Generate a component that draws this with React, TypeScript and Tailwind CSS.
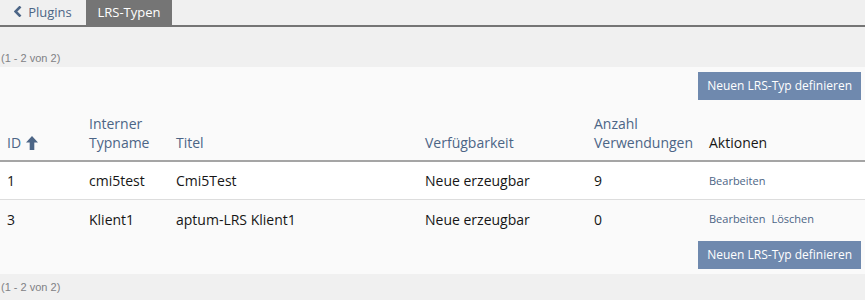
import React from "react";

const font = { fontFamily: '"Open Sans", "Noto Sans", sans-serif' };
const counterFont = { fontFamily: '"Liberation Sans", Arial, sans-serif' };

function ArrowUp() {
  return (
    <svg width="12" height="14" viewBox="0 0 12 14" className="inline-block ml-[5px] -mt-[3px] align-middle">
      <path d="M6 0 L12 6.5 H8.3 V14 H3.7 V6.5 H0 Z" fill="#4c6586" />
    </svg>
  );
}

function Chevron() {
  return (
    <svg width="8" height="11" viewBox="0 0 8 11" className="inline-block mr-[6px] align-middle -mt-[2px]">
      <path d="M6.5 0.5 L1.5 5.5 L6.5 10.5" stroke="#4c6586" strokeWidth="2.6" fill="none" />
    </svg>
  );
}

function Btn() {
  return (
    <button className="bg-[#6f89ae] text-white text-[12px] h-[28px] px-[9px] leading-[28px]">
      Neuen LRS-Typ definieren
    </button>
  );
}

const rows = [
  { id: "1", name: "cmi5test", title: "Cmi5Test", avail: "Neue erzeugbar", count: "9", actions: ["Bearbeiten"] },
  { id: "3", name: "Klient1", title: "aptum-LRS Klient1", avail: "Neue erzeugbar", count: "0", actions: ["Bearbeiten", "Löschen"] },
];

const cols = "grid grid-cols-[89px_87px_249px_169px_115px_1fr]";

export default function App() {
  return (
    <div className="w-[865px] h-[300px] bg-[#f0f0f0] text-[#161616]" style={font}>
      <div className="flex h-[25px] border-b-2 border-[#757575] box-content">
        <div className="w-[86px] flex items-center justify-center text-[13px] text-[#4c6586]">
          <Chevron />
          Plugins
        </div>
        <div className="w-[86px] flex items-center justify-center text-[13px] text-white bg-[#757575]">
          LRS-Typen
        </div>
      </div>
      <div className="h-[40px] flex items-end pb-[1px] text-[11px] text-[#7f8185] pl-[1px]" style={counterFont}>(1 - 2 von 2)</div>
      <div className="bg-[#fafafa]">
        <div className="flex justify-end pt-[5px] pr-[4px] pb-[5px]">
          <Btn />
        </div>
        <div className={`${cols} h-[57px] items-end pb-[8px] text-[14px] leading-[19px] text-[#4c6586] border-b-2 border-[#a5a5a5]`}>
          <div className="pl-[7px]">ID<ArrowUp /></div>
          <div>Interner<br />Typname</div>
          <div>Titel</div>
          <div>Verfügbarkeit</div>
          <div>Anzahl<br />Verwendungen</div>
          <div className="text-[#161616]">Aktionen</div>
        </div>
        {rows.map((r, i) => (
          <div
            key={r.id}
            className={`${cols} h-[38px] items-center text-[14px] ${i === 0 ? "bg-white border-b border-[#dddddd]" : "bg-[#fafafa]"}`}
          >
            <div className="pl-[7px]">{r.id}</div>
            <div>{r.name}</div>
            <div>{r.title}</div>
            <div>{r.avail}</div>
            <div>{r.count}</div>
            <div className="flex gap-[6px] text-[11px] text-[#4c6586] pt-[1px]">
              {r.actions.map((a) => (
                <span key={a}>{a}</span>
              ))}
            </div>
          </div>
        ))}
        <div className="flex justify-end pt-[3px] pr-[4px] pb-[5px]">
          <Btn />
        </div>
      </div>
      <div className="h-[26px] flex items-center text-[11px] text-[#7f8185] pl-[1px]" style={counterFont}>(1 - 2 von 2)</div>
    </div>
  );
}
